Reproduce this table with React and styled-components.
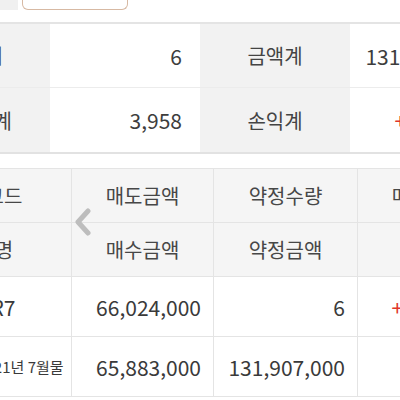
import React from 'react';
import styled, { createGlobalStyle } from 'styled-components';

const summary = [
  [{ label: '수량계', value: '6' }, { label: '금액계', value: '131,907,000' }],
  [{ label: '수수료계', value: '3,958' }, { label: '손익계', value: '+141,042', up: true }],
];

const headers = [
  ['종목코드', '매도금액', '약정수량', '매매손익'],
  ['종목명', '매수금액', '약정금액', '수수료'],
];

const rows = [
  { name: '105R7', sell: '66,024,000', qty: '6', pl: '+141,042' },
  { name: '코스피200 2021년 7월물', small: true, sell: '65,883,000', qty: '131,907,000', pl: '3,958' },
];

class App extends React.Component {
  render() {
    return (
      <Page>
        <GlobalStyle />
        <TopBar>
          <TabStub />
          <TabButton />
        </TopBar>
        <Scroller>
          <Summary>
            {summary.map((row, i) => row.map(c => [
              <SumLabel key={c.label} last={i === 1}>{c.label}</SumLabel>,
              <SumValue key={c.label + 'v'} last={i === 1} up={c.up}>{c.value}</SumValue>,
            ]))}
          </Summary>
          <TableWrap>
            <Table>
              {headers.map(h => h.map(t => <HeadCell key={t}>{t}</HeadCell>))}
              {rows.map(r => [
                <NameCell key={r.name} small={r.small}>{r.name}</NameCell>,
                <NumCell key={r.name + 's'}>{r.sell}</NumCell>,
                <NumCell key={r.name + 'q'}>{r.qty}</NumCell>,
                <NumCell key={r.name + 'p'} pad={20} up={r.pl.startsWith('+')}>{r.pl}</NumCell>,
              ])}
            </Table>
            <Chevron width="18" height="28" viewBox="0 0 18 28">
              <polyline points="14,3 4,14 14,25" fill="none" stroke="#bdbdbd" strokeWidth="5" strokeLinecap="round" strokeLinejoin="round" />
            </Chevron>
          </TableWrap>
        </Scroller>
      </Page>
    );
  }
}

const GlobalStyle = createGlobalStyle`
  body {
    margin: 0;
    background: #ffffff;
    font-family: "Noto Sans CJK KR", "Noto Sans", sans-serif;
  }
`
const Page = styled.div`
  width: 400px;
  height: 400px;
  overflow: hidden;
  background: #ffffff;
`
const TopBar = styled.div`
  display: flex;
  height: 22px;
  border-bottom: 2px solid #e4e4e4;
  box-sizing: content-box;
`
const TabStub = styled.div`
  width: 18px;
  height: 10px;
  background: #f0f0f0;
`
const TabButton = styled.div`
  width: 104px;
  height: 9px;
  margin-left: 4px;
  border: 1px solid #d7b9a3;
  border-top: none;
  border-radius: 0 0 6px 6px;
  background: #ffffff;
`
const Scroller = styled.div`
  width: 600px;
  margin-left: -100px;
`
const Summary = styled.div`
  display: grid;
  grid-template-columns: 150px 150px 150px 150px;
  grid-auto-rows: 64px;
  border-bottom: 2px solid #e2e2e2;
`
const SumCell = styled.div`
  display: flex;
  align-items: center;
  font-size: 20px;
  color: #3d3d3d;
  border-bottom: ${p => (p.last ? 'none' : '1px solid #ececec')};
  box-sizing: border-box;
`
const SumLabel = styled(SumCell)`
  justify-content: center;
  background: #f2f2f2;
  color: #444444;
`
const SumValue = styled(SumCell)`
  justify-content: flex-end;
  padding-right: 18px;
  font-size: 21px;
  color: ${p => (p.up ? '#e0352b' : '#3d3d3d')};
`
const TableWrap = styled.div`
  position: relative;
  margin-top: 14px;
`
const Table = styled.div`
  display: grid;
  grid-template-columns: 172px 142px 144px 142px;
  grid-template-rows: 54px 54px 60px 60px;
  border-top: 1px solid #e4e4e4;
`
const Cell = styled.div`
  display: flex;
  align-items: center;
  border-right: 1px solid #e4e4e4;
  border-bottom: 1px solid #e4e4e4;
  box-sizing: border-box;
  white-space: nowrap;
  overflow: hidden;
  color: #3a3a3a;
`
const HeadCell = styled(Cell)`
  justify-content: center;
  background: #f5f5f5;
  font-size: 20px;
  color: #474747;
`
const NameCell = styled(Cell)`
  justify-content: center;
  font-size: ${p => (p.small ? '15px' : '21px')};
`
const NumCell = styled(Cell)`
  justify-content: flex-end;
  padding-right: ${p => p.pad || 12}px;
  font-size: 21px;
  color: ${p => (p.up ? '#e0352b' : '#3a3a3a')};
`
const Chevron = styled.svg`
  position: absolute;
  left: 174px;
  top: 40px;
`

export default App;
